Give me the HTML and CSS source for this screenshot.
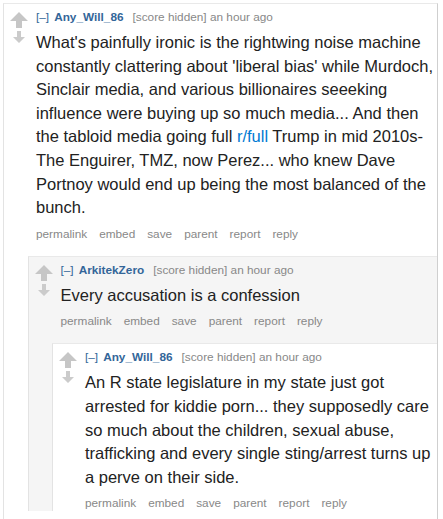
FILE: index.html
```html
<!DOCTYPE html>
<html>
<head>
  <title>Comments</title>
  <link rel="stylesheet" href="styles.css">
</head>
<body>
  <div class="comment odd">
    <div class="midcol">
      <svg class="arrow up" viewBox="0 0 18 16"><path d="M9 0 L18 9 L12 9 L12 16 L6 16 L6 9 L0 9 Z"/></svg>
      <svg class="arrow down" viewBox="0 0 12 12"><path d="M4 0 H8 V6 H12 L6 12 L0 6 H4 Z"/></svg>
    </div>
    <div class="main">
      <div class="entry">
        <p class="tagline">
          <a class="expand" href="#">[–]</a><a class="author" href="#">Any_Will_86</a><span class="score">[score hidden]</span> <time>an hour ago</time>
        </p>
        <div class="md">
          <p>What's painfully ironic is the rightwing noise machine constantly clattering about 'liberal bias' while Murdoch, Sinclair media, and various billionaires seeeking influence were buying up so much media... And then the tabloid media going full <a href="#">r/full</a> Trump in mid 2010s- The Enguirer, TMZ, now Perez... who knew Dave Portnoy would end up being the most balanced of the bunch.</p>
        </div>
        <ul class="buttons">
          <li><a href="#">permalink</a></li>
          <li><a href="#">embed</a></li>
          <li><a href="#">save</a></li>
          <li><a href="#">parent</a></li>
          <li><a href="#">report</a></li>
          <li><a href="#">reply</a></li>
        </ul>
      </div>

      <div class="child">
        <div class="comment even">
          <div class="midcol">
            <svg class="arrow up" viewBox="0 0 18 16"><path d="M9 0 L18 9 L12 9 L12 16 L6 16 L6 9 L0 9 Z"/></svg>
            <svg class="arrow down" viewBox="0 0 12 12"><path d="M4 0 H8 V6 H12 L6 12 L0 6 H4 Z"/></svg>
          </div>
          <div class="main">
            <div class="entry">
              <p class="tagline">
                <a class="expand" href="#">[–]</a><a class="author" href="#">ArkitekZero</a><span class="score">[score hidden]</span> <time>an hour ago</time>
              </p>
              <div class="md">
                <p>Every accusation is a confession</p>
              </div>
              <ul class="buttons">
                <li><a href="#">permalink</a></li>
                <li><a href="#">embed</a></li>
                <li><a href="#">save</a></li>
                <li><a href="#">parent</a></li>
                <li><a href="#">report</a></li>
                <li><a href="#">reply</a></li>
              </ul>
            </div>

            <div class="child">
              <div class="comment odd">
                <div class="midcol">
                  <svg class="arrow up" viewBox="0 0 18 16"><path d="M9 0 L18 9 L12 9 L12 16 L6 16 L6 9 L0 9 Z"/></svg>
                  <svg class="arrow down" viewBox="0 0 12 12"><path d="M4 0 H8 V6 H12 L6 12 L0 6 H4 Z"/></svg>
                </div>
                <div class="main">
                  <div class="entry">
                    <p class="tagline">
                      <a class="expand" href="#">[–]</a><a class="author" href="#">Any_Will_86</a><span class="score">[score hidden]</span> <time>an hour ago</time>
                    </p>
                    <div class="md">
                      <p>An R state legislature in my state just got arrested for kiddie porn... they supposedly care so much about the children, sexual abuse, trafficking and every single sting/arrest turns up a perve on their side.</p>
                    </div>
                    <ul class="buttons">
                      <li><a href="#">permalink</a></li>
                      <li><a href="#">embed</a></li>
                      <li><a href="#">save</a></li>
                      <li><a href="#">parent</a></li>
                      <li><a href="#">report</a></li>
                      <li><a href="#">reply</a></li>
                    </ul>
                  </div>
                </div>
              </div>
            </div>
          </div>
        </div>
      </div>
    </div>
  </div>
</body>
</html>
```

FILE: styles.css
```css
body {
  margin: 0;
  padding: 3px 5px 0 3px;
  background: #fff;
  font-family: "Liberation Sans", Arial, sans-serif;
  overflow: hidden;
}

a {
  text-decoration: none;
}

.comment {
  display: flex;
  border-top: 1px solid #e9e9e9;
  border-left: 1px solid #e3e3e3;
  padding-top: 5px;
}

.comment.odd {
  background: #fff;
}

.comment.even {
  background: #f5f5f5;
}

body > .comment {
  border-right: 1px solid #cfcfcf;
  min-height: 520px;
}

.midcol {
  flex: none;
  width: 18px;
  margin: 3px 8px 0 6px;
  display: flex;
  flex-direction: column;
  align-items: center;
}

.arrow {
  fill: #c6c6c6;
  display: block;
}

.arrow.up {
  width: 18px;
  height: 16px;
}

.arrow.down {
  width: 12px;
  height: 12px;
  margin-top: 3px;
  fill: #cbcbcb;
}

.main {
  flex: 1;
  min-width: 0;
}

.tagline {
  margin: 0;
  font-size: 11.8px;
  line-height: 16px;
  color: #888;
  white-space: nowrap;
}

.tagline .expand {
  color: #369;
  margin-right: 5px;
}

.tagline .author {
  color: #369;
  font-weight: bold;
  margin-right: 9px;
}

.md {
  margin: 6px 0;
  padding-right: 2px;
  font-size: 16.5px;
  line-height: 23.6px;
  color: #222;
}

.md p {
  margin: 0;
}

.md a {
  color: #0079d3;
}

.buttons {
  list-style: none;
  margin: 0;
  padding: 0;
  display: flex;
  gap: 12px;
  font-size: 11.8px;
  line-height: 16px;
}

.buttons a {
  color: #888;
}

.child {
  margin-top: 14px;
  margin-left: -8.5px;
}
```
